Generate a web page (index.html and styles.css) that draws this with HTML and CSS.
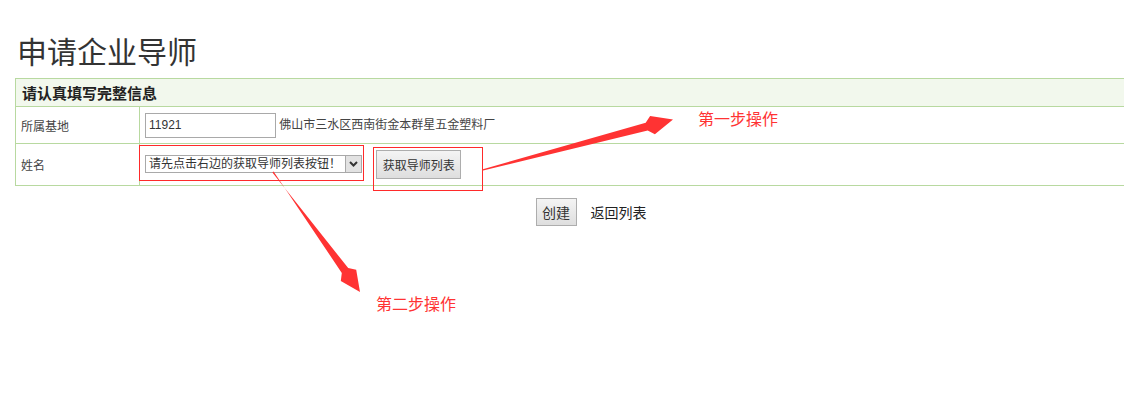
FILE: index.html
```html
<!DOCTYPE html>
<html lang="zh-CN">
<head>
<meta charset="utf-8">
<title>申请企业导师</title>
<link rel="stylesheet" href="styles.css">
</head>
<body>
<div class="page">
  <h1 class="title">申请企业导师</h1>
  <div class="form">
    <table class="info">
      <tr class="head-row">
        <th colspan="2">请认真填写完整信息</th>
      </tr>
      <tr class="row-base">
        <td class="label">所属基地</td>
        <td class="field"><input class="text-input" type="text" value="11921"> 佛山市三水区西南街金本群星五金塑料厂</td>
      </tr>
      <tr class="row-name">
        <td class="label">姓名</td>
        <td class="field">
          <span class="select-box">
            <span class="select-text">请先点击右边的获取导师列表按钮！</span>
            <span class="select-arrow"><svg width="9" height="6" viewBox="0 0 9 6"><path d="M1 1 L4.5 4.5 L8 1" fill="none" stroke="#333" stroke-width="2"/></svg></span>
          </span>
          <button class="btn btn-fetch" type="button">获取导师列表</button>
        </td>
      </tr>
    </table>
    <div class="actions">
      <button class="btn btn-create" type="button">创建</button>
      <a class="back-link">返回列表</a>
    </div>
  </div>

  <div class="mark mark-1"></div>
  <div class="mark mark-2"></div>
  <svg class="annot" width="1124" height="401" viewBox="0 0 1124 401">
    <polygon points="482,169.4 645.7,122.7 650.1,115.9 673,119.5 654.9,134.3 647.7,130.5 482,170.8" fill="#f33"/>
    <polygon points="272.4,172.4 348.2,268.1 356.2,269.7 360,292 340.8,280.9 341.8,272.9 273.6,171.6" fill="#f33"/>
  </svg>
  <span class="note note-1">第一步操作</span>
  <span class="note note-2">第二步操作</span>
</div>
</body>
</html>
```

FILE: styles.css
```css
html {
  overflow: hidden;
}
body {
  margin: 0;
  background: #fff;
  font-family: "Liberation Sans", "Noto Sans CJK SC", sans-serif;
  color: #333;
}
.page {
  position: relative;
  width: 1124px;
  height: 401px;
  padding: 35px 0 0 15px;
  box-sizing: border-box;
}
.title {
  margin: 0 0 13px 2px;
  font-family: "Noto Sans CJK SC", sans-serif;
  font-weight: normal;
  font-size: 30px;
  line-height: 30px;
  height: 30px;
  color: #333;
}
.form {
  width: 1152px;
}
.info {
  width: 100%;
  border-collapse: collapse;
  border: 1px solid #b8d9a0;
  font-size: 12px;
}
.info th,
.info td {
  border: 1px solid #b8d9a0;
  padding: 0 5px;
  text-align: left;
}
.head-row th {
  background: #f2f8ed;
  font-size: 15px;
  font-weight: bold;
  color: #222;
  height: 27px;
  padding-left: 6px;
  font-family: "Noto Sans CJK SC", sans-serif;
}
.label {
  width: 113px;
  color: #444;
}
.row-base td {
  height: 36px;
}
.row-name td {
  height: 41px;
}
.field {
  color: #444;
  white-space: nowrap;
}
.text-input {
  width: 131px;
  height: 25px;
  box-sizing: border-box;
  border: 1px solid #a9a9a9;
  padding: 0 3px;
  font-family: "Liberation Sans", sans-serif;
  font-size: 12px;
  color: #333;
  vertical-align: middle;
  margin: 0;
}
.select-box {
  display: inline-flex;
  align-items: stretch;
  width: 217px;
  height: 18px;
  box-sizing: border-box;
  border: 1px solid #a9a9a9;
  vertical-align: middle;
  margin-top: -2px;
}
.select-text {
  flex: 1;
  font-size: 12px;
  line-height: 16px;
  padding-left: 3px;
  color: #333;
}
.select-arrow {
  width: 15px;
  display: flex;
  align-items: center;
  justify-content: center;
  background: #e2e2e2;
  border-left: 1px solid #a9a9a9;
}
.btn {
  font-family: "Noto Sans CJK SC", sans-serif;
  background: linear-gradient(#f4f4f4, #dedede);
  border: 1px solid #adadad;
  border-radius: 0;
  color: #333;
  padding: 0;
  margin: 0;
  vertical-align: middle;
  box-sizing: border-box;
}
.btn-fetch {
  width: 85px;
  height: 29px;
  font-size: 12px;
  margin-left: 11px;
}
.actions {
  display: flex;
  justify-content: center;
  align-items: center;
  gap: 14px;
  margin-top: 12px;
}
.btn-create {
  width: 41px;
  height: 28px;
  font-size: 14px;
}
.back-link {
  font-family: "Noto Sans CJK SC", sans-serif;
  font-size: 14px;
  color: #222;
}
.mark {
  position: absolute;
  border: 1px solid #ff2a2a;
  box-sizing: border-box;
  pointer-events: none;
}
.mark-1 {
  left: 139px;
  top: 145px;
  width: 225px;
  height: 36px;
}
.mark-2 {
  left: 373px;
  top: 147px;
  width: 110px;
  height: 44px;
}
.annot {
  position: absolute;
  top: 0;
  left: 0;
  pointer-events: none;
}
.note {
  position: absolute;
  font-family: "Noto Sans CJK SC", sans-serif;
  font-size: 16px;
  line-height: 16px;
  color: #f33;
  white-space: nowrap;
}
.note-1 {
  left: 698px;
  top: 110px;
}
.note-2 {
  left: 376px;
  top: 295px;
}
```
